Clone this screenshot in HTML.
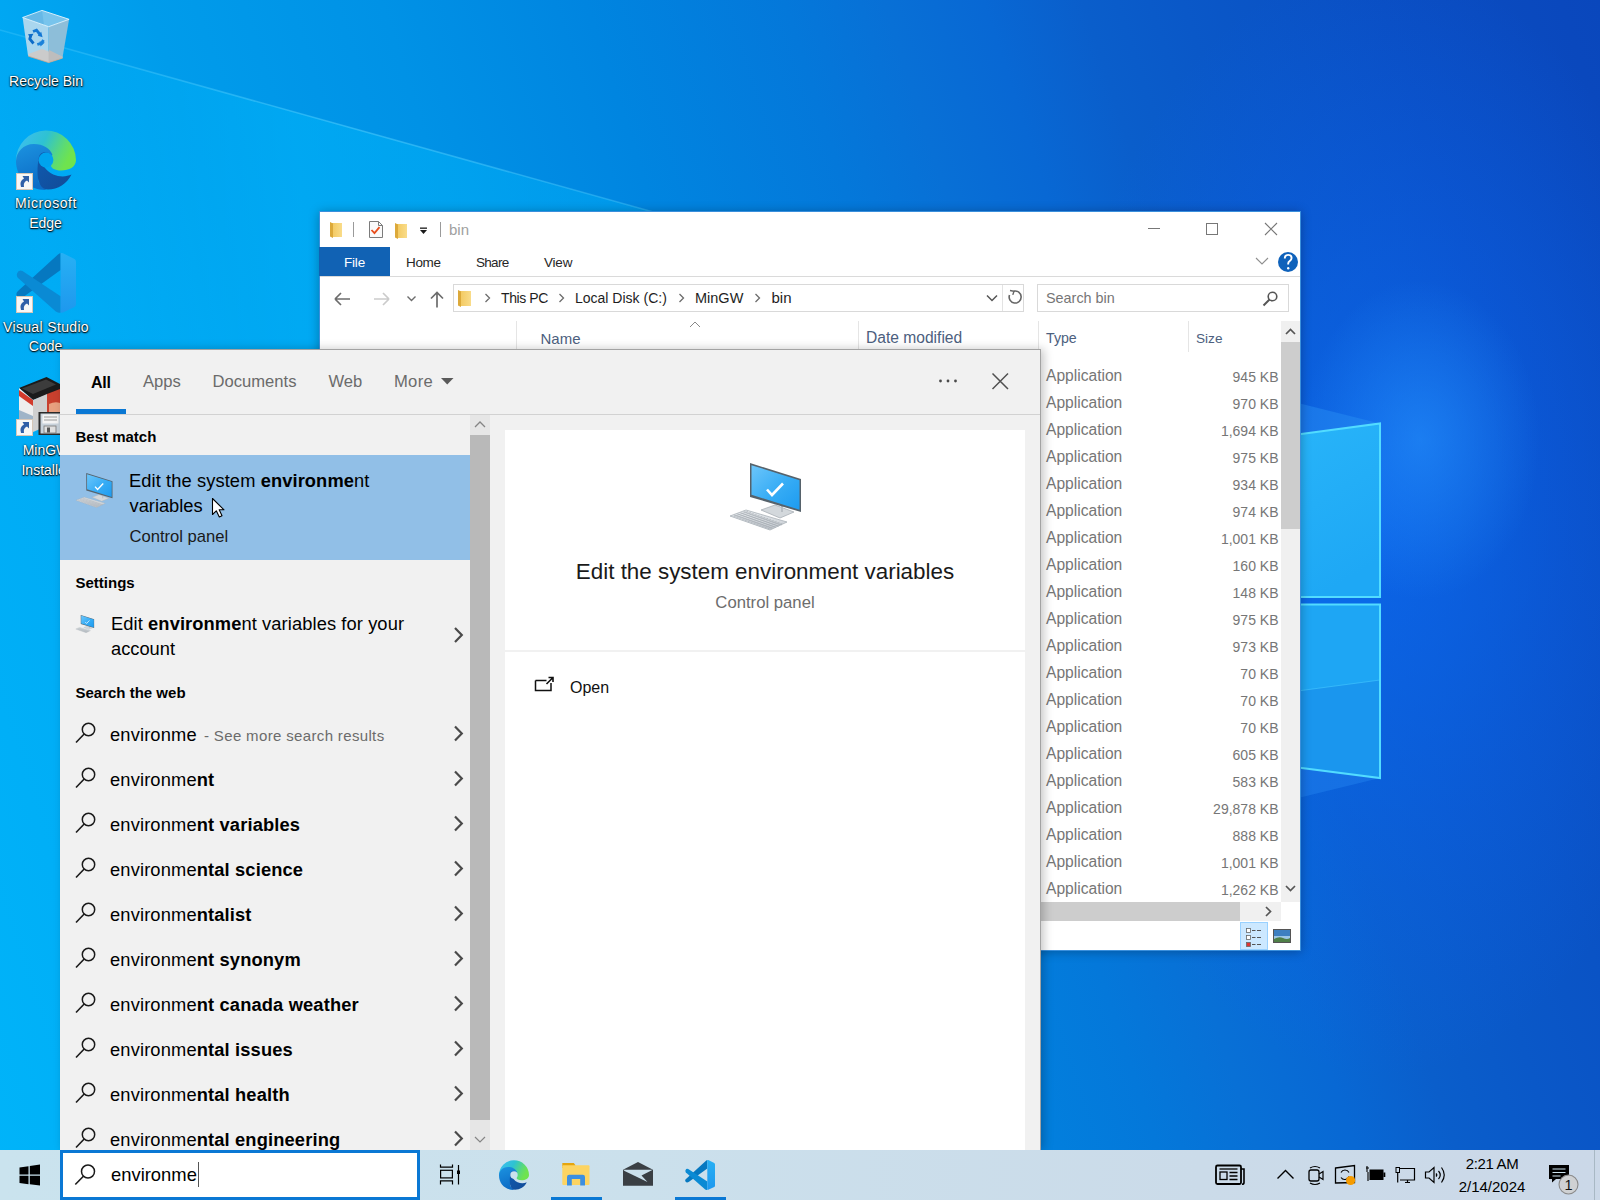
<!DOCTYPE html>
<html><head><meta charset="utf-8"><style>
*{box-sizing:border-box;margin:0;padding:0}
html,body{width:1600px;height:1200px;overflow:hidden;font-family:"Liberation Sans",sans-serif;background:#0a5cc8}
.a{position:absolute}
.t{position:absolute;white-space:nowrap;line-height:1}
svg{position:absolute;overflow:visible}
.dl{position:absolute;white-space:nowrap;line-height:1;color:#fff;font-size:14px;text-shadow:0 1px 1px rgba(0,0,0,.85),0 0 2px rgba(0,0,0,.7),1px 1px 2px rgba(0,0,0,.5)}
</style></head><body>
<div class="a" style="left:0;top:0;width:1600px;height:1200px;background:
 radial-gradient(ellipse 120px 160px at 1420px 440px, rgba(40,150,255,.55) 0%, rgba(30,130,255,0) 100%),
 radial-gradient(ellipse 330px 560px at 1380px 520px, rgba(12,106,245,.7) 0%, rgba(12,100,240,.35) 55%, rgba(12,90,220,0) 100%),
 linear-gradient(72deg,#00b4f9 0%,#00aff7 8%,#00aaf4 17.5%,#00a5f1 21%,#009ceb 27%,#0092e6 38.7%,#0085e0 49%,#0478da 59%,#0870d6 64%,#0868d4 69%,#0a5ecb 74%,#0a58c8 79%,#0a53c5 84%,#0a4ec2 89%,#0a48bd 98%,#0a47bc 100%)"></div>
<svg style="left:0;top:0" width="1600" height="1200" viewBox="0 0 1600 1200">
 <defs>
  <linearGradient id="ray" x1="0" y1="0" x2="1" y2="0"><stop offset="0" stop-color="#60d4ff" stop-opacity=".25"/><stop offset=".5" stop-color="#60d4ff" stop-opacity=".45"/><stop offset="1" stop-color="#60d4ff" stop-opacity=".3"/></linearGradient>
  <linearGradient id="beam" gradientUnits="userSpaceOnUse" x1="0" y1="0" x2="700" y2="0"><stop offset="0" stop-color="#00beff" stop-opacity="0"/><stop offset=".12" stop-color="#00beff" stop-opacity=".15"/><stop offset=".43" stop-color="#00beff" stop-opacity=".42"/><stop offset="1" stop-color="#00beff" stop-opacity=".3"/></linearGradient>
  <linearGradient id="tp" x1="0" y1="0" x2="0.3" y2="1"><stop offset="0" stop-color="#28b4f9"/><stop offset="1" stop-color="#1ea8f5"/></linearGradient>
 </defs>
 <path d="M0 30 L700 225 L700 430 L0 430z" fill="url(#beam)"/>
 <path d="M0 30 L700 225" stroke="url(#ray)" stroke-width="1.6"/>
 <!-- light beams to the left of logo -->
 <path d="M1290 401 L1380 423.5 L1290 436z" fill="#2a90f5" fill-opacity=".45"/>
 <path d="M1290 767 L1380 778 L1290 800z" fill="#2a90f5" fill-opacity=".35"/>
 <rect x="1290" y="597" width="90" height="7" fill="#0a6ae8"/>
 <!-- panes -->
 <path d="M1290 435.5 L1380 423.5 L1380 597 L1290 597z" fill="url(#tp)"/>
 <path d="M1290 604.5 L1380 604.5 L1380 778 L1290 766.5z" fill="#1ea6f4"/>
 <path d="M1290 692 L1380 680 L1380 778 L1290 766.5z" fill="#1a96ee"/>
 <path d="M1290 692 L1380 680" stroke="#45c8ff" stroke-width="1" stroke-opacity=".6"/>
 <path d="M1290 435.5 L1380 423.5 L1380 597 L1290 597" fill="none" stroke="#52dcff" stroke-width="2"/>
 <path d="M1290 604.5 L1380 604.5 L1380 778 L1290 766.5" fill="none" stroke="#52dcff" stroke-width="2"/>
</svg>
<svg style="left:0;top:0" width="100" height="480" viewBox="0 0 100 480">
 <defs>
  <linearGradient id="rbg" x1="0" y1="0" x2="1" y2="0"><stop offset="0" stop-color="#8ccbe6"/><stop offset=".45" stop-color="#c4e6f4"/><stop offset="1" stop-color="#8fc9e3"/></linearGradient>
  
  <linearGradient id="edgeD_top" x1="0" y1="0" x2="1" y2="0.35"><stop offset="0" stop-color="#40bdf6"/><stop offset=".5" stop-color="#2ec2d2"/><stop offset=".85" stop-color="#5fdc6e"/><stop offset="1" stop-color="#6fe34e"/></linearGradient>
  <linearGradient id="edgeD_mid" x1="0" y1="0" x2="0.3" y2="1"><stop offset="0" stop-color="#1c93e0"/><stop offset="1" stop-color="#0c6cc6"/></linearGradient>
  <linearGradient id="edgeD_dark" x1="0" y1="0" x2="1" y2="1"><stop offset="0" stop-color="#0f5bb0"/><stop offset="1" stop-color="#124a96"/></linearGradient>
  <symbol id="edgeD" viewBox="0 0 60 60">
   <path d="M0 31 A30 30 0 0 1 60 30 C60 37 53 40.5 45 40.5 C39 40.5 35 38 35 35.5 L30 30z" fill="url(#edgeD_top)"/>
   <path d="M0 31 C0.5 22 7 14 18 14 C27 14 34 18 36.5 25 L30 30 L22.6 30 L22.6 52 L30 60 C12 60 0 47 0 31z" fill="url(#edgeD_mid)"/>
   <path d="M22.6 30 C22.6 21 30 21 34 24 C26 22 23 30 29 38 C36 47 48 48 55.5 44.6 C51 54 42 59.5 32 59.6 C25 59.6 21.5 52 21.5 42 C21.5 36 22 32 22.6 30z" fill="url(#edgeD_dark)"/>
   <circle cx="30" cy="30" r="7.4" fill="#00a3ee"/>
  </symbol>
  <symbol id="vsD" viewBox="0 0 60 60">
   <path d="M44.6 0 L44.6 17 L8 43.5 Q3.5 46.5 1 43 Q-0.8 40 2.5 37.5 L42 1.5 Q43.5 0.2 44.6 0z" fill="#0678c0"/>
   <path d="M1 20.5 Q2.5 16.5 6.5 18 L44.6 43.2 L44.6 59.5 Q42 60.3 39.8 58.6 L1.8 24.8 Q0.4 23 1 20.5z" fill="#0a8ad4"/>
   <path d="M44.6 0 Q46 -0.3 47.5 0.5 L58.5 6 Q60 7 60 9 L60 51 Q60 53 58.5 54 L47.5 59.2 Q46 60 44.6 59.5z" fill="url(#vsD_g)"/>
   <linearGradient id="vsD_g" x1="0" y1="0" x2="0" y2="1"><stop offset="0" stop-color="#27b0f4"/><stop offset="1" stop-color="#1e98ee"/></linearGradient>
  </symbol>
 </defs>
 <!-- recycle bin -->
 <path d="M22.6 17.5 L42 10.4 L69.1 19.3 L48.6 26.7z" fill="#66b8e6"/>
 <path d="M42 10.4 L69.1 19.3 L48.6 26.7 L44 25z" fill="#78c4ec"/>
 <path d="M22.6 17.5 L48.6 26.7 L48.6 62.4 L28 55.4z" fill="#a9d6ee"/>
 <path d="M48.6 26.7 L69.1 19.3 L62.6 57 L48.6 62.4z" fill="#8dbed9"/>
 <path d="M28.3 54 L42 49 L62.6 56.7 L62.4 58.2 L48.6 62.6 L28.4 56.2z" fill="#cbcbcb"/>
 <path d="M48.6 49.8 L62.6 56.7 L62.4 58.2 L48.6 62.6z" fill="#bdbdbd"/>
 <path d="M28.4 56.2 L48.6 62.6 L62.4 58.2" fill="none" stroke="#c8a890" stroke-width=".8"/>
 <path d="M22.6 17.5 L42 10.4 L69.1 19.3 L48.6 26.7z" fill="none" stroke="#e8f6fd" stroke-width="1" stroke-opacity=".85"/>
 <g stroke-linecap="butt">
  <path d="M33 31.5 L36.5 30.2 L40 34.5" fill="none" stroke="#1478d4" stroke-width="2.8"/>
  <path d="M37.8 35.8 L42.6 37.2 L41.2 31.8z" fill="#1478d4"/>
  <path d="M30.8 35.2 L29.8 39 L33.5 43.5" fill="none" stroke="#0c6cc8" stroke-width="2.8"/>
  <path d="M28 34.2 L33.5 33.8 L30.5 38.8z" fill="#0c6cc8"/>
  <path d="M37.3 44.5 L41.5 43.2 L43.5 40" fill="none" stroke="#1a82da" stroke-width="2.8"/>
  <path d="M40.5 46.5 L44.8 42.5 L39.6 41.2z" fill="#1a82da"/>
 </g>
 <use href="#edgeD" x="16" y="130" width="60" height="60"/>
 <use href="#vsD" x="16" y="253" width="60" height="60"/>
 <!-- mingw installer -->
 <path d="M19 388 L46.5 377 L60 384 L60 390 L33 400z" fill="#1b1b1b"/>
 <path d="M22 388.5 L46 379.5 L56 384.5 L33 394z" fill="#3c3c3c"/>
 <path d="M19 388 L33 400 L33 432 L19 428z" fill="#eeeeee"/>
 <path d="M19 390 L33 400 L33 406 L19 396z" fill="#d23a2c"/>
 <path d="M19 410 L33 416 L33 432 L19 428z" fill="#9fb4c8"/>
 <path d="M33 400 L47 394 L47 426 L33 432z" fill="#cfcfcf"/>
 <path d="M47 394 L60 389 L60 418 L47 420z" fill="#c8402e"/>
 <path d="M49 404 q6 -3 11 -1 v12 l-11 3z" fill="#e8a080"/>
 <rect x="38.5" y="412" width="22" height="23" fill="#2b2b2b"/>
 <rect x="40.5" y="413.5" width="19.5" height="20" fill="#c9d3dc"/>
 <rect x="42.5" y="414.5" width="16" height="9" fill="#f4f4f4"/>
 <path d="M44 417 h13 M44 420 h13" stroke="#9a9a9a" stroke-width="1"/>
 <rect x="44" y="426" width="12" height="7" fill="#e0e0e0" stroke="#777" stroke-width=".8"/>
 <rect x="47" y="427.5" width="3" height="5" fill="#555"/>
 <rect x="16.5" y="173.5" width="16" height="16" fill="#f7f7f7" stroke="#d6c7b8"/><path d="M21 187 q-2 -6 3 -8.5 l-1.5 -2.5 h6.5 v6.5 l-2 -2 q-4 1.5 -3 6.5z" fill="#2f5fa8"/>
 <rect x="16.5" y="296.5" width="16" height="16" fill="#f7f7f7" stroke="#d6c7b8"/><path d="M21 310 q-2 -6 3 -8.5 l-1.5 -2.5 h6.5 v6.5 l-2 -2 q-4 1.5 -3 6.5z" fill="#2f5fa8"/>
 <rect x="16.5" y="419.5" width="16" height="16" fill="#f7f7f7" stroke="#d6c7b8"/><path d="M21 433 q-2 -6 3 -8.5 l-1.5 -2.5 h6.5 v6.5 l-2 -2 q-4 1.5 -3 6.5z" fill="#2f5fa8"/>
</svg>
<div class="dl" style="left:-14px;width:120px;text-align:center;top:73.6px">Recycle Bin</div>
<div class="dl" style="left:-14px;width:120px;text-align:center;top:195.6px;letter-spacing:0.6px">Microsoft</div>
<div class="dl" style="left:-14.5px;width:120px;text-align:center;top:215.6px">Edge</div>
<div class="dl" style="left:-14px;width:120px;text-align:center;top:320.1px;letter-spacing:0.35px">Visual Studio</div>
<div class="dl" style="left:-14.5px;width:120px;text-align:center;top:339.1px">Code</div>
<div class="dl" style="left:-14px;width:120px;text-align:center;top:442.6px">MinGW</div>
<div class="dl" style="left:-14px;width:120px;text-align:center;top:462.6px">Installer</div>
<div class="a" style="left:319px;top:211px;width:982px;height:740px;background:#fff;border:1px solid #3a8fdc;box-shadow:0 1px 10px rgba(0,0,0,.28)"></div>
<svg style="left:0;top:0" width="1600" height="1000" viewBox="0 0 1600 1000">
 <defs>
  <linearGradient id="fold" x1="0" y1="0" x2="1" y2="0"><stop offset="0" stop-color="#f3c960"/><stop offset="1" stop-color="#f9dc8a"/></linearGradient>
 </defs>
 <g id="fi">
  <path d="M332 223 h10 v14 h-10z" fill="url(#fold)"/><path d="M330 222 l3 1.5 v14.5 l-3 -1.5z" fill="#dca93a"/>
 </g>
 <rect x="353" y="222" width="1" height="15" fill="#9a9a9a"/>
 <path d="M369.5 221.5 h9 l4 4 v12 h-13z" fill="#fafafa" stroke="#7b7b7b" stroke-width="1"/>
 <path d="M378.5 221.5 v4 h4" fill="none" stroke="#7b7b7b" stroke-width="1"/>
 <path d="M371.5 230 l3 3.2 l5 -6" fill="none" stroke="#e84d1c" stroke-width="1.8"/>
 <path d="M397 224 h10 v14 h-10z" fill="url(#fold)"/><path d="M395 223 l3 1.5 v14.5 l-3 -1.5z" fill="#dca93a"/>
 <rect x="420" y="227.5" width="7" height="1.3" fill="#1a1a1a"/><path d="M420 230 h7 l-3.5 4z" fill="#1a1a1a"/>
 <rect x="440" y="222" width="1" height="15" fill="#9a9a9a"/>
 <!-- window controls -->
 <rect x="1148" y="228" width="12" height="1" fill="#777"/>
 <rect x="1206.5" y="223.5" width="11" height="11" fill="none" stroke="#777" stroke-width="1"/>
 <path d="M1265 223 l12 12 M1277 223 l-12 12" stroke="#777" stroke-width="1.1"/>
 <!-- ribbon right -->
 <path d="M1256 258 l6 6 l6 -6" fill="none" stroke="#8f8f8f" stroke-width="1.1"/>
 <circle cx="1288" cy="262" r="10" fill="#0f62bb"/>
 <path d="M1284.8 258.5 q0 -3.6 3.4 -3.6 q3.4 0 3.4 3.2 q0 2 -2.2 3.2 q-1.2 .7 -1.2 2.5 v.8" fill="none" stroke="#fff" stroke-width="1.9"/>
 <circle cx="1288.2" cy="268.3" r="1.2" fill="#fff"/>
 <!-- nav arrows -->
 <path d="M335 299 h15 M335 299 l6 -6 M335 299 l6 6" fill="none" stroke="#6c6c6c" stroke-width="1.7"/>
 <path d="M374 299 h15 M389 299 l-6 -6 M389 299 l-6 6" fill="none" stroke="#cbcbcb" stroke-width="1.7"/>
 <path d="M407.5 296.5 l4 4 l4 -4" fill="none" stroke="#6c6c6c" stroke-width="1.4"/>
 <path d="M437 292.5 v15 M431 298.5 l6 -6 l6 6" fill="none" stroke="#6c6c6c" stroke-width="1.7"/>
 <!-- address box -->
 <rect x="453.5" y="284.5" width="570" height="27" fill="none" stroke="#d9d9d9"/>
 <path d="M460 291 h11 v15 h-11z" fill="url(#fold)"/><path d="M458 290 l3 1.5 v15.5 l-3 -1.5z" fill="#dca93a"/>
 <path d="M485.5 294 l4 4 l-4 4 M559.5 294 l4 4 l-4 4 M679.5 294 l4 4 l-4 4 M755.5 294 l4 4 l-4 4" fill="none" stroke="#6c6c6c" stroke-width="1.3"/>
 <path d="M987 295.5 l5 5 l5 -5" fill="none" stroke="#555" stroke-width="1.5"/>
 <rect x="1002" y="285" width="1" height="26" fill="#e3e3e3"/>
 <path d="M1009.5 295 a6 6 0 1 0 4.2 -3.8" fill="none" stroke="#666" stroke-width="1.6"/><path d="M1010 290.5 l4 .8 l-1.2 3.6" fill="none" stroke="#666" stroke-width="1.4"/>
 <!-- search box -->
 <rect x="1037.5" y="284.5" width="251" height="27" fill="none" stroke="#d9d9d9"/>
 <circle cx="1272.5" cy="296.5" r="4.3" fill="none" stroke="#555" stroke-width="1.6"/><path d="M1269.5 299.5 l-6 6" stroke="#555" stroke-width="1.9"/>
 <!-- header separators + sort arrow -->
 <rect x="516" y="321" width="1" height="31" fill="#e5e5e5"/>
 <rect x="858" y="321" width="1" height="31" fill="#e5e5e5"/>
 <rect x="1038" y="321" width="1" height="31" fill="#e5e5e5"/>
 <rect x="1188" y="321" width="1" height="31" fill="#e5e5e5"/>
 <path d="M690 327 l5 -5 l5 5" fill="none" stroke="#888" stroke-width="1"/>
 <!-- vertical scrollbar -->
 <rect x="1281" y="321" width="19" height="581" fill="#f0f0f0"/>
 <rect x="1281" y="342" width="19" height="187" fill="#cdcdcd"/>
 <path d="M1286 334 l4.5 -4.5 l4.5 4.5" fill="none" stroke="#555" stroke-width="1.7"/>
 <path d="M1286 886 l4.5 4.5 l4.5 -4.5" fill="none" stroke="#555" stroke-width="1.7"/>
 <!-- horizontal scrollbar -->
 <rect x="320" y="902" width="961" height="19" fill="#f0f0f0"/>
 <rect x="320" y="902" width="920" height="19" fill="#cdcdcd"/>
 <path d="M1266 907 l4.5 4.5 l-4.5 4.5" fill="none" stroke="#555" stroke-width="1.7"/>
 <!-- view buttons -->
 <rect x="1240.5" y="922.5" width="27" height="27" fill="#cce8ff" stroke="#99d1ff"/>
 <rect x="1246.5" y="928.5" width="4" height="4" fill="#fff" stroke="#666" stroke-width=".8"/><rect x="1246.5" y="935.5" width="4" height="4" fill="#fff" stroke="#666" stroke-width=".8"/><rect x="1246.5" y="942.5" width="4" height="4" fill="#d33" stroke="#666" stroke-width=".8"/>
 <path d="M1252 930.5 h3.5 M1257 930.5 h4 M1252 937.5 h3.5 M1257 937.5 h4 M1252 944.5 h3.5 M1257 944.5 h4" stroke="#555" stroke-width="1"/>
 <rect x="1273.5" y="929.5" width="17" height="13" fill="#3d7fc0" stroke="#555" stroke-width="1"/>
 <path d="M1274 936 h16 v6 h-16z" fill="#9cc6e6"/>
 <path d="M1274 939 q5 -3 9 -1 t7 0 v4 h-16z" fill="#4f7f48"/>
</svg>
<div class="a" style="left:319px;top:247px;width:71px;height:29px;background:#1162b4;"></div>
<div class="a" style="left:320px;top:276px;width:980px;height:1px;background:#dadada;"></div>
<div class="t" style="left:449.0px;top:222.2px;font-size:15px;color:#a0a0a0">bin</div>
<div class="t" style="left:344.0px;top:255.5px;font-size:13.5px;color:#fff;letter-spacing:-0.2px">File</div>
<div class="t" style="left:406.0px;top:255.5px;font-size:13.5px;color:#262626;letter-spacing:-0.35px">Home</div>
<div class="t" style="left:476.0px;top:255.5px;font-size:13.5px;color:#262626;letter-spacing:-0.7px">Share</div>
<div class="t" style="left:544.0px;top:255.5px;font-size:13.5px;color:#262626;letter-spacing:-0.2px">View</div>
<div class="t" style="left:501.0px;top:291.1px;font-size:14px;color:#1e1e1e;letter-spacing:-0.4px">This PC</div>
<div class="t" style="left:575.0px;top:291.1px;font-size:14px;color:#1e1e1e">Local Disk (C:)</div>
<div class="t" style="left:695.0px;top:290.7px;font-size:14.5px;color:#1e1e1e">MinGW</div>
<div class="t" style="left:771.5px;top:290.2px;font-size:15px;color:#1e1e1e">bin</div>
<div class="t" style="left:1046.0px;top:290.8px;font-size:14.4px;color:#767676">Search bin</div>
<div class="t" style="left:540.5px;top:330.8px;font-size:15px;color:#4c607e">Name</div>
<div class="t" style="left:866.0px;top:330.2px;font-size:15.6px;color:#4c607e">Date modified</div>
<div class="t" style="left:1046.0px;top:331.4px;font-size:14.2px;color:#4c607e">Type</div>
<div class="t" style="left:1196.0px;top:331.9px;font-size:13.6px;color:#4c607e">Size</div>
<div class="t" style="left:1046.0px;top:368.2px;font-size:15.6px;color:#767676">Application</div>
<div class="t" style="left:1178.5px;width:100px;text-align:right;top:369.6px;font-size:14px;color:#767676">945 KB</div>
<div class="t" style="left:1046.0px;top:395.2px;font-size:15.6px;color:#767676">Application</div>
<div class="t" style="left:1178.5px;width:100px;text-align:right;top:396.6px;font-size:14px;color:#767676">970 KB</div>
<div class="t" style="left:1046.0px;top:422.2px;font-size:15.6px;color:#767676">Application</div>
<div class="t" style="left:1178.5px;width:100px;text-align:right;top:423.6px;font-size:14px;color:#767676">1,694 KB</div>
<div class="t" style="left:1046.0px;top:449.2px;font-size:15.6px;color:#767676">Application</div>
<div class="t" style="left:1178.5px;width:100px;text-align:right;top:450.6px;font-size:14px;color:#767676">975 KB</div>
<div class="t" style="left:1046.0px;top:476.2px;font-size:15.6px;color:#767676">Application</div>
<div class="t" style="left:1178.5px;width:100px;text-align:right;top:477.6px;font-size:14px;color:#767676">934 KB</div>
<div class="t" style="left:1046.0px;top:503.2px;font-size:15.6px;color:#767676">Application</div>
<div class="t" style="left:1178.5px;width:100px;text-align:right;top:504.6px;font-size:14px;color:#767676">974 KB</div>
<div class="t" style="left:1046.0px;top:530.2px;font-size:15.6px;color:#767676">Application</div>
<div class="t" style="left:1178.5px;width:100px;text-align:right;top:531.6px;font-size:14px;color:#767676">1,001 KB</div>
<div class="t" style="left:1046.0px;top:557.2px;font-size:15.6px;color:#767676">Application</div>
<div class="t" style="left:1178.5px;width:100px;text-align:right;top:558.6px;font-size:14px;color:#767676">160 KB</div>
<div class="t" style="left:1046.0px;top:584.2px;font-size:15.6px;color:#767676">Application</div>
<div class="t" style="left:1178.5px;width:100px;text-align:right;top:585.6px;font-size:14px;color:#767676">148 KB</div>
<div class="t" style="left:1046.0px;top:611.2px;font-size:15.6px;color:#767676">Application</div>
<div class="t" style="left:1178.5px;width:100px;text-align:right;top:612.6px;font-size:14px;color:#767676">975 KB</div>
<div class="t" style="left:1046.0px;top:638.2px;font-size:15.6px;color:#767676">Application</div>
<div class="t" style="left:1178.5px;width:100px;text-align:right;top:639.6px;font-size:14px;color:#767676">973 KB</div>
<div class="t" style="left:1046.0px;top:665.2px;font-size:15.6px;color:#767676">Application</div>
<div class="t" style="left:1178.5px;width:100px;text-align:right;top:666.6px;font-size:14px;color:#767676">70 KB</div>
<div class="t" style="left:1046.0px;top:692.2px;font-size:15.6px;color:#767676">Application</div>
<div class="t" style="left:1178.5px;width:100px;text-align:right;top:693.6px;font-size:14px;color:#767676">70 KB</div>
<div class="t" style="left:1046.0px;top:719.2px;font-size:15.6px;color:#767676">Application</div>
<div class="t" style="left:1178.5px;width:100px;text-align:right;top:720.6px;font-size:14px;color:#767676">70 KB</div>
<div class="t" style="left:1046.0px;top:746.2px;font-size:15.6px;color:#767676">Application</div>
<div class="t" style="left:1178.5px;width:100px;text-align:right;top:747.6px;font-size:14px;color:#767676">605 KB</div>
<div class="t" style="left:1046.0px;top:773.2px;font-size:15.6px;color:#767676">Application</div>
<div class="t" style="left:1178.5px;width:100px;text-align:right;top:774.6px;font-size:14px;color:#767676">583 KB</div>
<div class="t" style="left:1046.0px;top:800.2px;font-size:15.6px;color:#767676">Application</div>
<div class="t" style="left:1178.5px;width:100px;text-align:right;top:801.6px;font-size:14px;color:#767676">29,878 KB</div>
<div class="t" style="left:1046.0px;top:827.2px;font-size:15.6px;color:#767676">Application</div>
<div class="t" style="left:1178.5px;width:100px;text-align:right;top:828.6px;font-size:14px;color:#767676">888 KB</div>
<div class="t" style="left:1046.0px;top:854.2px;font-size:15.6px;color:#767676">Application</div>
<div class="t" style="left:1178.5px;width:100px;text-align:right;top:855.6px;font-size:14px;color:#767676">1,001 KB</div>
<div class="t" style="left:1046.0px;top:881.2px;font-size:15.6px;color:#767676">Application</div>
<div class="t" style="left:1178.5px;width:100px;text-align:right;top:882.6px;font-size:14px;color:#767676">1,262 KB</div>
<div class="a" style="left:60px;top:349px;width:981px;height:801px;background:#f1f1f1;border-top:1px solid #a3a3a3;border-right:1px solid #a3a3a3;box-shadow:3px 0 9px rgba(0,0,0,.22)"></div>
<svg style="left:0;top:0" width="1100" height="1200" viewBox="0 0 1100 1200">
 <symbol id="mon" viewBox="0 0 72 68">
 <defs>
  <linearGradient id="scr" x1="0" y1="0" x2="1" y2="1"><stop offset="0" stop-color="#6cc6fb"/><stop offset=".55" stop-color="#36acf5"/><stop offset="1" stop-color="#1d9bf0"/></linearGradient>
  <linearGradient id="kb" x1="0" y1="0" x2="0" y2="1"><stop offset="0" stop-color="#e9ecef"/><stop offset="1" stop-color="#c4cad0"/></linearGradient>
 </defs>
 <path d="M31 47 L45 42 L64 49 L50 55z" fill="#d3d8dc" stroke="#a9b0b6" stroke-width=".8"/>
 <path d="M51 40 L53 40 L53 49 L51 49z" fill="#b8bec4"/>
 <path d="M20 0 L71 16 L71 49 L20 34z" fill="#56626b"/>
 <path d="M21.5 2.2 L69.5 17.2 L69.5 46.8 L21.5 31.8z" fill="url(#scr)"/>
 <path d="M37 26.5 l5 5.5 l11 -11.5" fill="none" stroke="#fff" stroke-width="2.6"/>
 <path d="M16 47 L57 59 L40 67 L0 53z" fill="url(#kb)" stroke="#aab1b7" stroke-width=".8"/>
 <path d="M4.00 52.08 L42.40 65.52 M7.20 50.88 L45.60 64.32 M10.40 49.68 L48.80 63.12 M13.60 48.48 L52.00 61.92 M3.66 53.70 L18.06 48.30 M6.51 54.70 L20.91 49.30 M9.37 55.70 L23.77 50.30 M12.23 56.70 L26.63 51.30 M15.09 57.70 L29.49 52.30 M17.94 58.70 L32.34 53.30 M20.80 59.70 L35.20 54.30 M23.66 60.70 L38.06 55.30 M26.51 61.70 L40.91 56.30 M29.37 62.70 L43.77 57.30 M32.23 63.70 L46.63 58.30 M35.09 64.70 L49.49 59.30 M37.94 65.70 L52.34 60.30" stroke="#a3aab0" stroke-width=".6"/>
</symbol>
 <rect x="76" y="409" width="50" height="5" fill="#0a78d4"/>
 <rect x="60" y="414" width="980" height="1" fill="#d2d2d2"/>
 <path d="M441 378 h12.5 l-6.25 6.5z" fill="#5a5a5a"/>
 <circle cx="940.5" cy="381" r="1.4" fill="#4a4a4a"/><circle cx="948" cy="381" r="1.4" fill="#4a4a4a"/><circle cx="955.5" cy="381" r="1.4" fill="#4a4a4a"/>
 <path d="M992.5 373.5 l15.5 15.5 M1008 373.5 l-15.5 15.5" stroke="#505050" stroke-width="1.5"/>
 <rect x="60" y="455" width="410" height="105" fill="#91bfe7"/>
 <use href="#mon" x="76" y="473" width="37" height="35"/>
 <use href="#mon" x="75.5" y="615" width="19" height="18"/>
 <!-- scrollbar -->
 <rect x="470" y="415" width="20" height="735" fill="#e6e6e6"/>
 <rect x="470" y="435" width="20" height="685" fill="#b9b9b9"/>
 <path d="M475 427 l5 -5 l5 5" fill="none" stroke="#858585" stroke-width="1.3"/>
 <path d="M475 1137 l5 5 l5 -5" fill="none" stroke="#858585" stroke-width="1.2"/>
 <!-- preview -->
 <rect x="505" y="430" width="520" height="220" fill="#fff"/>
 <rect x="505" y="652" width="520" height="498" fill="#fff"/>
 <use href="#mon" x="730" y="463" width="72" height="68"/>
 <path d="M535.5 680.5 h11 M535.5 680.5 v10 h15.5 v-7.5" fill="none" stroke="#111" stroke-width="1.5"/>
 <path d="M546.5 684 l6 -6 M548.5 677.5 h4.5 v4.5" fill="none" stroke="#111" stroke-width="1.6"/>
</svg>
<div class="t" style="left:91.0px;top:374.9px;font-size:16px;color:#000;font-weight:700;letter-spacing:-0.3px">All</div>
<div class="t" style="left:143.0px;top:374.4px;font-size:16.6px;color:#6b6b6b">Apps</div>
<div class="t" style="left:212.5px;top:374.4px;font-size:16.6px;color:#6b6b6b">Documents</div>
<div class="t" style="left:328.5px;top:374.4px;font-size:16.6px;color:#6b6b6b">Web</div>
<div class="t" style="left:394.0px;top:374.4px;font-size:16.6px;color:#6b6b6b;letter-spacing:0.3px">More</div>
<div class="t" style="left:75.5px;top:429.1px;font-size:15px;color:#000;font-weight:700">Best match</div>
<div class="t" style="left:129.0px;top:472.4px;font-size:18.3px;color:#000;letter-spacing:0.1px">Edit the system <b>environme</b>nt</div>
<div class="t" style="left:129.5px;top:497.4px;font-size:18.3px;color:#000">variables</div>
<div class="t" style="left:129.5px;top:529.4px;font-size:16.6px;color:#1a1a1a">Control panel</div>
<div class="t" style="left:75.5px;top:574.8px;font-size:15px;color:#000;font-weight:700">Settings</div>
<div class="t" style="left:111.0px;top:614.9px;font-size:18.3px;color:#000;letter-spacing:0.1px">Edit <b>environme</b>nt variables for your</div>
<div class="t" style="left:111.0px;top:639.9px;font-size:18.3px;color:#000">account</div>
<div class="t" style="left:75.5px;top:684.8px;font-size:15px;color:#000;font-weight:700">Search the web</div>
<div class="t" style="left:110.0px;top:725.9px;font-size:18.3px;color:#000;letter-spacing:0.15px">environme</div>
<div class="t" style="left:110.0px;top:770.9px;font-size:18.3px;color:#000;letter-spacing:0.15px">environme<b>nt</b></div>
<div class="t" style="left:110.0px;top:815.9px;font-size:18.3px;color:#000;letter-spacing:0.15px">environme<b>nt variables</b></div>
<div class="t" style="left:110.0px;top:860.9px;font-size:18.3px;color:#000;letter-spacing:0.15px">environme<b>ntal science</b></div>
<div class="t" style="left:110.0px;top:905.9px;font-size:18.3px;color:#000;letter-spacing:0.15px">environme<b>ntalist</b></div>
<div class="t" style="left:110.0px;top:950.9px;font-size:18.3px;color:#000;letter-spacing:0.15px">environme<b>nt synonym</b></div>
<div class="t" style="left:110.0px;top:995.9px;font-size:18.3px;color:#000;letter-spacing:0.15px">environme<b>nt canada weather</b></div>
<div class="t" style="left:110.0px;top:1040.9px;font-size:18.3px;color:#000;letter-spacing:0.15px">environme<b>ntal issues</b></div>
<div class="t" style="left:110.0px;top:1085.9px;font-size:18.3px;color:#000;letter-spacing:0.15px">environme<b>ntal health</b></div>
<div class="t" style="left:110.0px;top:1130.9px;font-size:18.3px;color:#000;letter-spacing:0.15px">environme<b>ntal engineering</b></div>
<svg style="left:0;top:0" width="500" height="1200" viewBox="0 0 500 1200">
<path d="M455 628 l6.8 7 l-6.8 7" fill="none" stroke="#4a4a4a" stroke-width="2.2"/>
<path d="M455 726.5 l6.8 7 l-6.8 7" fill="none" stroke="#4a4a4a" stroke-width="2.2"/>
<path d="M455 771.5 l6.8 7 l-6.8 7" fill="none" stroke="#4a4a4a" stroke-width="2.2"/>
<path d="M455 816.5 l6.8 7 l-6.8 7" fill="none" stroke="#4a4a4a" stroke-width="2.2"/>
<path d="M455 861.5 l6.8 7 l-6.8 7" fill="none" stroke="#4a4a4a" stroke-width="2.2"/>
<path d="M455 906.5 l6.8 7 l-6.8 7" fill="none" stroke="#4a4a4a" stroke-width="2.2"/>
<path d="M455 951.5 l6.8 7 l-6.8 7" fill="none" stroke="#4a4a4a" stroke-width="2.2"/>
<path d="M455 996.5 l6.8 7 l-6.8 7" fill="none" stroke="#4a4a4a" stroke-width="2.2"/>
<path d="M455 1041.5 l6.8 7 l-6.8 7" fill="none" stroke="#4a4a4a" stroke-width="2.2"/>
<path d="M455 1086.5 l6.8 7 l-6.8 7" fill="none" stroke="#4a4a4a" stroke-width="2.2"/>
<path d="M455 1131.5 l6.8 7 l-6.8 7" fill="none" stroke="#4a4a4a" stroke-width="2.2"/>
<circle cx="88.5" cy="729.5" r="6.2" fill="none" stroke="#1a1a1a" stroke-width="1.5"/><path d="M84.2 734 L76 742.5" stroke="#1a1a1a" stroke-width="1.6"/>
<circle cx="88.5" cy="774.5" r="6.2" fill="none" stroke="#1a1a1a" stroke-width="1.5"/><path d="M84.2 779 L76 787.5" stroke="#1a1a1a" stroke-width="1.6"/>
<circle cx="88.5" cy="819.5" r="6.2" fill="none" stroke="#1a1a1a" stroke-width="1.5"/><path d="M84.2 824 L76 832.5" stroke="#1a1a1a" stroke-width="1.6"/>
<circle cx="88.5" cy="864.5" r="6.2" fill="none" stroke="#1a1a1a" stroke-width="1.5"/><path d="M84.2 869 L76 877.5" stroke="#1a1a1a" stroke-width="1.6"/>
<circle cx="88.5" cy="909.5" r="6.2" fill="none" stroke="#1a1a1a" stroke-width="1.5"/><path d="M84.2 914 L76 922.5" stroke="#1a1a1a" stroke-width="1.6"/>
<circle cx="88.5" cy="954.5" r="6.2" fill="none" stroke="#1a1a1a" stroke-width="1.5"/><path d="M84.2 959 L76 967.5" stroke="#1a1a1a" stroke-width="1.6"/>
<circle cx="88.5" cy="999.5" r="6.2" fill="none" stroke="#1a1a1a" stroke-width="1.5"/><path d="M84.2 1004 L76 1012.5" stroke="#1a1a1a" stroke-width="1.6"/>
<circle cx="88.5" cy="1044.5" r="6.2" fill="none" stroke="#1a1a1a" stroke-width="1.5"/><path d="M84.2 1049 L76 1057.5" stroke="#1a1a1a" stroke-width="1.6"/>
<circle cx="88.5" cy="1089.5" r="6.2" fill="none" stroke="#1a1a1a" stroke-width="1.5"/><path d="M84.2 1094 L76 1102.5" stroke="#1a1a1a" stroke-width="1.6"/>
<circle cx="88.5" cy="1134.5" r="6.2" fill="none" stroke="#1a1a1a" stroke-width="1.5"/><path d="M84.2 1139 L76 1147.5" stroke="#1a1a1a" stroke-width="1.6"/>
</svg>
<div class="t" style="left:204.0px;top:727.8px;font-size:15px;color:#6b6b6b;letter-spacing:0.35px">- See more search results</div>
<div class="t" style="left:505px;width:520px;text-align:center;top:560.5px;font-size:22.4px;color:#1a1a1a">Edit the system environment variables</div>
<div class="t" style="left:505px;width:520px;text-align:center;top:594.8px;font-size:16.7px;color:#6d6d6d">Control panel</div>
<div class="t" style="left:570.0px;top:680.4px;font-size:16px;color:#111">Open</div>
<svg style="left:0;top:0" width="300" height="600" viewBox="0 0 300 600"><path d="M212.5 498.5 L212.5 514.5 L216.3 510.8 L219.3 517 L222 515.8 L219.2 509.8 L224 509.8 Z" fill="#fff" stroke="#000" stroke-width="1.1" stroke-linejoin="round"/></svg>
<div class="a" style="left:0px;top:1150px;width:1600px;height:50px;background:linear-gradient(90deg,#cae3ee 0%,#cbe0ec 40%,#cbdbe9 75%,#cbd8e8 100%);"></div>
<div class="a" style="left:60px;top:1150px;width:360px;height:50px;background:#fff;border:3px solid #0a78d4"></div>
<div class="t" style="left:111.0px;top:1166.4px;font-size:18.4px;color:#000">environme</div>
<div class="a" style="left:197.5px;top:1162px;width:1.5px;height:25px;background:#555;"></div>
<svg style="left:0;top:0" width="1600" height="1200" viewBox="0 0 1600 1200">
 <defs>
  
  <linearGradient id="edgeT_top" x1="0" y1="0" x2="1" y2="0.35"><stop offset="0" stop-color="#40bdf6"/><stop offset=".5" stop-color="#2ec2d2"/><stop offset=".85" stop-color="#5fdc6e"/><stop offset="1" stop-color="#6fe34e"/></linearGradient>
  <linearGradient id="edgeT_mid" x1="0" y1="0" x2="0.3" y2="1"><stop offset="0" stop-color="#1c93e0"/><stop offset="1" stop-color="#0c6cc6"/></linearGradient>
  <linearGradient id="edgeT_dark" x1="0" y1="0" x2="1" y2="1"><stop offset="0" stop-color="#0f5bb0"/><stop offset="1" stop-color="#124a96"/></linearGradient>
  <symbol id="edgeT" viewBox="0 0 60 60">
   <path d="M0 31 A30 30 0 0 1 60 30 C60 37 53 40.5 45 40.5 C39 40.5 35 38 35 35.5 L30 30z" fill="url(#edgeT_top)"/>
   <path d="M0 31 C0.5 22 7 14 18 14 C27 14 34 18 36.5 25 L30 30 L22.6 30 L22.6 52 L30 60 C12 60 0 47 0 31z" fill="url(#edgeT_mid)"/>
   <path d="M22.6 30 C22.6 21 30 21 34 24 C26 22 23 30 29 38 C36 47 48 48 55.5 44.6 C51 54 42 59.5 32 59.6 C25 59.6 21.5 52 21.5 42 C21.5 36 22 32 22.6 30z" fill="url(#edgeT_dark)"/>
   <circle cx="30" cy="30" r="7.4" fill="#cbe1ed"/>
  </symbol>
  <symbol id="vsT" viewBox="0 0 60 60">
   <path d="M44.6 0 L44.6 17 L8 43.5 Q3.5 46.5 1 43 Q-0.8 40 2.5 37.5 L42 1.5 Q43.5 0.2 44.6 0z" fill="#0678c0"/>
   <path d="M1 20.5 Q2.5 16.5 6.5 18 L44.6 43.2 L44.6 59.5 Q42 60.3 39.8 58.6 L1.8 24.8 Q0.4 23 1 20.5z" fill="#0a8ad4"/>
   <path d="M44.6 0 Q46 -0.3 47.5 0.5 L58.5 6 Q60 7 60 9 L60 51 Q60 53 58.5 54 L47.5 59.2 Q46 60 44.6 59.5z" fill="url(#vsT_g)"/>
   <linearGradient id="vsT_g" x1="0" y1="0" x2="0" y2="1"><stop offset="0" stop-color="#27b0f4"/><stop offset="1" stop-color="#1e98ee"/></linearGradient>
  </symbol>
 </defs>
 <!-- windows logo -->
 <path d="M19.5 1167.5 L28.5 1166.2 V1174.6 H19.5z M29.8 1166 L40 1164.6 V1174.6 H29.8z M19.5 1175.8 H28.5 V1184.2 L19.5 1183z M29.8 1175.8 H40 V1185.6 L29.8 1184.3z" fill="#000"/>
 <!-- search icon -->
 <circle cx="88" cy="1171.5" r="6.5" fill="none" stroke="#1a1a1a" stroke-width="1.5"/><path d="M83.4 1176.3 L75.3 1184.5" stroke="#1a1a1a" stroke-width="1.6"/>
 <!-- task view -->
 <path d="M440.5 1164.5 v2.7 h12 v-2.7 M440.5 1184.5 v-3.7 h12 v3.7" fill="none" stroke="#000" stroke-width="1.2"/>
 <rect x="440.6" y="1170.3" width="11.8" height="7.6" fill="none" stroke="#000" stroke-width="1.2"/>
 <rect x="457.9" y="1165" width="1.2" height="19.5" fill="#000"/><rect x="457" y="1170.5" width="3" height="3.5" fill="#000"/>
 <!-- edge -->
 <use href="#edgeT" x="499" y="1160" width="30" height="30"/>
 <!-- explorer -->
 <path d="M562.3 1163 h11.5 l1.5 2 v3 h-13z" fill="#e5a50e"/>
 <rect x="562.3" y="1165.2" width="27.2" height="19.8" rx="1" fill="#fcd462"/>
 <path d="M567 1185.5 v-8.5 q0 -2.3 2.3 -2.3 h13.4 q2.3 0 2.3 2.3 v8.5 h-4.8 v-6.5 h-8.4 v6.5z" fill="#3c8fe0"/>
 <rect x="551" y="1197" width="51" height="3" fill="#0a78d4"/>
 <!-- mail -->
 <path d="M623 1169.7 L638 1162 L653 1169.7 V1185.8 H623z" fill="#3a3f44"/>
 <path d="M623.2 1169.8 L652.8 1169.8 L641.5 1175.6 L647.5 1182 L624.6 1171z" fill="#cbe0ec"/>
 <!-- vscode -->
 <use href="#vsT" x="685" y="1160" width="30" height="30"/>
 <rect x="675" y="1197" width="51" height="3" fill="#0a78d4"/>
 <!-- tray: news -->
 <rect x="1216" y="1165.5" width="25" height="18.5" rx="1.5" fill="none" stroke="#000" stroke-width="1.8"/>
 <path d="M1241 1169 h3 v13.5 q0 1.8 -2 1.8" fill="none" stroke="#000" stroke-width="1.6"/>
 <path d="M1219.5 1169 h18" stroke="#000" stroke-width="1.3"/>
 <rect x="1220" y="1172" width="7" height="7.5" fill="none" stroke="#000" stroke-width="1.3"/>
 <path d="M1229.5 1172.5 h8 M1229.5 1176 h8 M1229.5 1179.5 h8" stroke="#000" stroke-width="1.3"/>
 <!-- caret -->
 <path d="M1277.5 1178.5 l8 -8 l8 8" fill="none" stroke="#000" stroke-width="1.4"/>
 <!-- meet now -->
 <rect x="1309" y="1170" width="10" height="11" rx="2" fill="none" stroke="#000" stroke-width="1.3"/>
 <path d="M1319 1174 l4 -2.5 v8 l-4 -2.5" fill="none" stroke="#000" stroke-width="1.2"/>
 <path d="M1310 1168 q5 -3 10 0 M1310 1183 q5 3 10 0" fill="none" stroke="#000" stroke-width="1.1"/>
 <!-- update icon -->
 <path d="M1335.5 1168 L1354.5 1165.5 V1182.5 L1335.5 1183z" fill="none" stroke="#000" stroke-width="1.3"/>
 <path d="M1341 1172.5 a4.5 4.5 0 0 1 8 0 M1349 1176.5 a4.5 4.5 0 0 1 -8 1" fill="none" stroke="#000" stroke-width="1.1"/>
 <circle cx="1350.6" cy="1180.5" r="4.6" fill="#f59b00"/>
 <!-- battery -->
 <path d="M1367 1166 v6 M1366 1168 h3 M1368 1172 v9" stroke="#000" stroke-width="1.1"/>
 <rect x="1369.5" y="1169.5" width="14" height="10.5" fill="#000"/>
 <rect x="1383.5" y="1172.5" width="1.8" height="4.5" fill="#000"/>
 <!-- network -->
 <rect x="1396" y="1167.5" width="3.5" height="5" fill="none" stroke="#000" stroke-width="1"/>
 <path d="M1397.7 1172.5 v10 M1400 1168.5 h14.5 v11.5 h-14.5 M1405 1182.5 h5 M1407.5 1180 v2.5" fill="none" stroke="#000" stroke-width="1.2"/>
 <!-- volume -->
 <path d="M1425.5 1172 h3.5 l5 -4.5 v15 l-5 -4.5 h-3.5z" fill="none" stroke="#000" stroke-width="1.2"/>
 <path d="M1436 1173.5 q1.5 1.5 0 3 M1438.5 1171 q3.5 4 0 8 M1441.5 1167.5 q5.5 7.5 0 15" fill="none" stroke="#000" stroke-width="1.2"/>
 <!-- notification -->
 <path d="M1549 1165 h20 v14 h-13 l-4 3.5 v-3.5 h-3z" fill="#000"/>
 <path d="M1552.5 1169 h13 M1552.5 1172.5 h13 M1552.5 1176 h8" stroke="#cbe2ee" stroke-width="1.2"/>
 <circle cx="1568.5" cy="1184.5" r="9.5" fill="#cfd1d3" stroke="#8a8a8a" stroke-width="1.1"/>
 <rect x="1594" y="1150" width="1" height="50" fill="#a8b8c4"/>
</svg>
<div class="t" style="left:1441px;width:102px;text-align:center;top:1156.2px;font-size:15px;color:#000;letter-spacing:-0.35px">2:21 AM</div>
<div class="t" style="left:1441px;width:102px;text-align:center;top:1178.8px;font-size:15px;color:#000">2/14/2024</div>
<div class="t" style="left:1563.5px;width:10px;text-align:center;top:1177.7px;font-size:14.5px;color:#111">1</div>
</body></html>
